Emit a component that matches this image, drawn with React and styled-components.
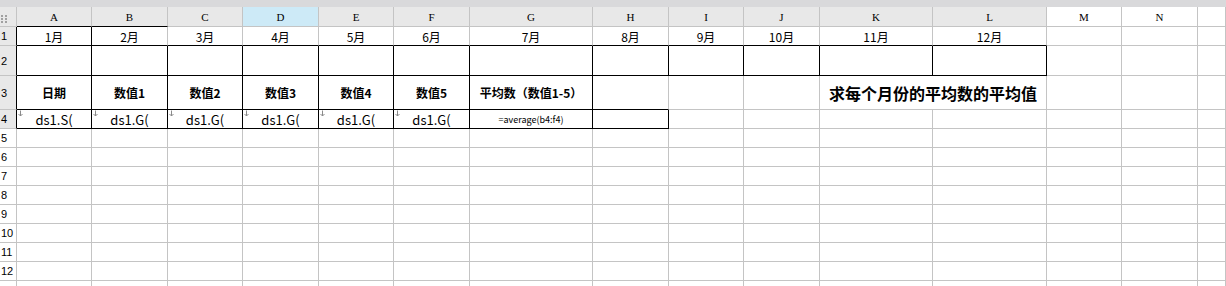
import React from "react";
import styled, { createGlobalStyle } from "styled-components";

const GRID = "#c4c4c4";
const INK = "#000";
const HEAD_BG = "#e8e8e8";

const GlobalStyle = createGlobalStyle`
  html, body {
    margin: 0;
    padding: 0;
    background: #fff;
  }
  body {
    font-family: "Noto Sans CJK SC", "Noto Sans", sans-serif;
    overflow: hidden;
  }
`;

const COLS = ["A", "B", "C", "D", "E", "F", "G", "H", "I", "J", "K", "L", "M", "N"];
const WIDTHS = [75, 76, 75, 76, 75, 76, 123, 76, 75, 76, 113, 114, 75, 76];
const ROW_HEIGHTS = [19, 30, 34, 19, 19, 19, 19, 19, 19, 19, 19, 19];

const MONTHS = Array.from({ length: 12 }, (_, i) => `${i + 1}月`);
const TITLES = ["日期", "数值1", "数值2", "数值3", "数值4", "数值5", "平均数（数值1-5）"];
const FIELDS = ["ds1.S(", "ds1.G(", "ds1.G(", "ds1.G(", "ds1.G(", "ds1.G("];

// cells framed with black borders in the report template
const boxed = (r, c) => {
  if (r === 1) return c === 0;
  if (r === 2) return c <= 11;
  if (r === 3) return c <= 6;
  if (r === 4) return c <= 7;
  return false;
};

const Page = styled.div`
  width: 1226px;
  height: 286px;
  overflow: hidden;
`;

const TopBar = styled.div`
  height: 7px;
  background: #d9d9db;
`;

const Sheet = styled.div`
  display: grid;
  grid-template-columns: 17px ${WIDTHS.map((w) => `${w}px`).join(" ")} 1fr;
  grid-template-rows: 20px ${ROW_HEIGHTS.map((h) => `${h}px`).join(" ")} 19px;
`;

const Cell = styled.div`
  box-sizing: border-box;
  display: flex;
  align-items: center;
  justify-content: center;
  position: relative;
  overflow: visible;
  white-space: nowrap;
  border-right: 1px solid ${(p) => p.$right || GRID};
  border-bottom: 1px solid ${(p) => p.$bottom || GRID};
  background: ${(p) => p.$bg || "#fff"};
  grid-column: ${(p) => (p.$span ? `span ${p.$span}` : "auto")};
  font-size: ${(p) => p.$size || 12}px;
  font-weight: ${(p) => (p.$bold ? 700 : 400)};
  color: ${INK};
`;

const ColHead = styled(Cell)`
  font-family: "Liberation Serif", "DejaVu Serif", serif;
  font-size: 11px;
  padding-top: 1px;
`;

const RowHead = styled(Cell)`
  justify-content: flex-start;
  padding-left: 1px;
  font-family: "Liberation Sans", sans-serif;
  font-size: 11px;
`;

const Corner = styled(Cell)`
  align-items: flex-start;
  justify-content: flex-start;
  padding: 8px 0 0 1px;
`;

const Expand = styled.svg`
  position: absolute;
  left: 1px;
  top: 0;
`;

const Dots = () => (
  <svg width="7" height="9" viewBox="0 0 7 9">
    {[0, 3, 6].map((y) =>
      [0, 4].map((x) => (
        <rect key={`${x}-${y}`} x={x} y={y} width="2" height="2" fill="#a0a0a0" />
      ))
    )}
  </svg>
);

const ExpandArrow = () => (
  <Expand width="5" height="7" viewBox="0 0 5 7">
    <path d="M2.5 0.5 V6 M0.5 4 L2.5 6 L4.5 4" stroke="#8a8a8a" strokeWidth="1" fill="none" />
  </Expand>
);

const cellContent = (r, c) => {
  if (r === 1 && c <= 11) return { text: MONTHS[c] };
  if (r === 3 && c <= 6) return { text: TITLES[c], bold: true };
  if (r === 4 && c <= 5) return { text: FIELDS[c], size: 13, arrow: true };
  if (r === 4 && c === 6) return { text: "=average(b4:f4)", size: 9 };
  return { text: "" };
};

const headBg = (c) => {
  if (c === 3) return "#cdeaf7";
  if (c <= 11) return HEAD_BG;
  return "#fff";
};

const App = () => {
  const cells = [];

  cells.push(
    <Corner key="corner" $bg={HEAD_BG} $bottom={GRID}>
      <Dots />
    </Corner>
  );
  COLS.forEach((name, c) => {
    cells.push(
      <ColHead key={`h-${name}`} $bg={headBg(c)} $bottom={boxed(1, c) || c === 1 ? INK : GRID}>
        {name}
      </ColHead>
    );
  });
  cells.push(<ColHead key="h-rest" />);

  ROW_HEIGHTS.forEach((_, i) => {
    const r = i + 1;
    cells.push(
      <RowHead key={`r-${r}`} $bg={r <= 4 ? HEAD_BG : "#fff"} $right={boxed(r, 0) ? INK : GRID}>
        {r}
      </RowHead>
    );

    for (let c = 0; c < COLS.length; c++) {
      if (r === 3 && c === 10) {
        cells.push(
          <Cell key={`${r}-${c}`} $span={2} $size={16} $bold>
            求每个月份的平均数的平均值
          </Cell>
        );
        c++;
        continue;
      }
      const { text, bold, size, arrow } = cellContent(r, c);
      cells.push(
        <Cell
          key={`${r}-${c}`}
          $right={boxed(r, c) || boxed(r, c + 1) ? INK : GRID}
          $bottom={boxed(r, c) || boxed(r + 1, c) ? INK : GRID}
          $bold={bold}
          $size={size}
        >
          {arrow && <ExpandArrow />}
          {text}
        </Cell>
      );
    }
    cells.push(<Cell key={`${r}-rest`} />);
  });

  // partly visible row below the last numbered one
  cells.push(<RowHead key="r-tail" />);
  for (let c = 0; c <= COLS.length; c++) cells.push(<Cell key={`tail-${c}`} />);

  return (
    <Page>
      <GlobalStyle />
      <TopBar />
      <Sheet>{cells}</Sheet>
    </Page>
  );
};

export default App;
